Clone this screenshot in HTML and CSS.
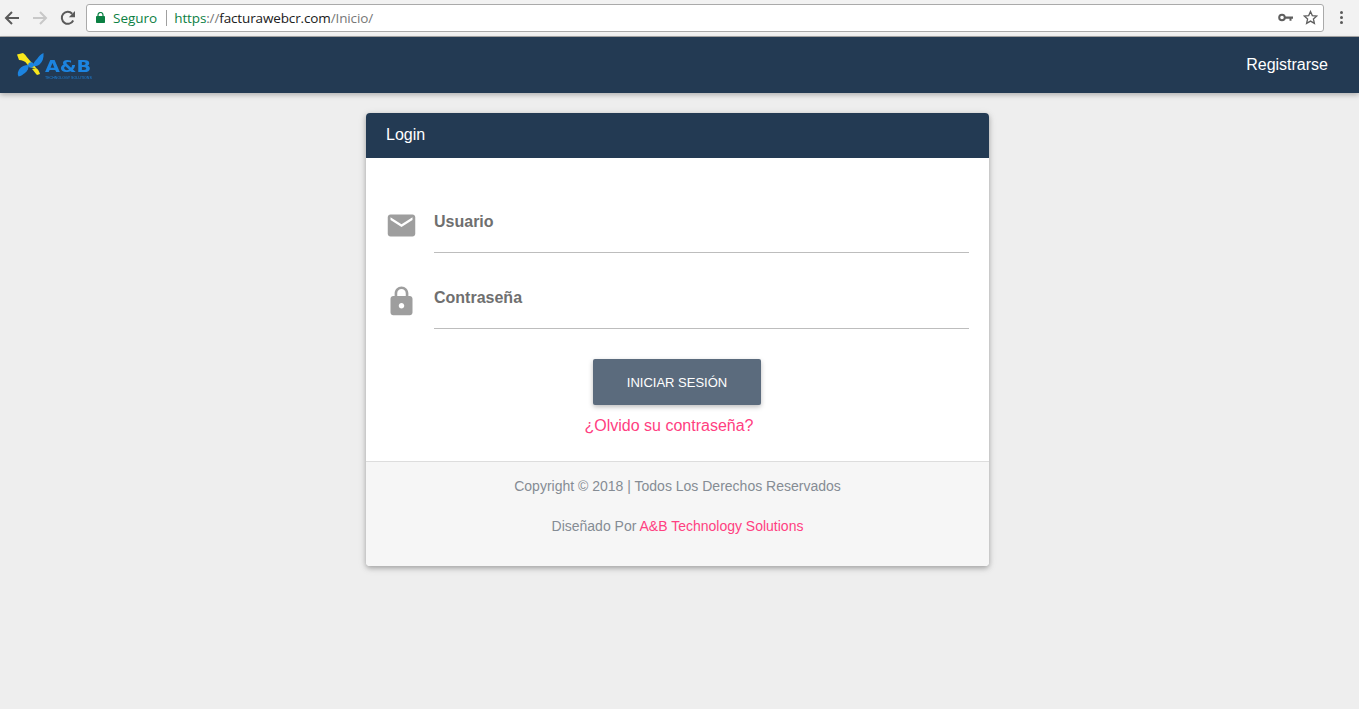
FILE: index.html
```html
<!DOCTYPE html>
<html lang="es">
<head>
<meta charset="utf-8">
<title>Login</title>
<link rel="stylesheet" href="styles.css">
</head>
<body>
<div class="browser">
  <svg class="tool first" width="16" height="16" viewBox="0 0 16 16"><path d="M15 8H2.500M8 2 2 8l6 6" fill="none" stroke="#5a5a5a" stroke-width="2"/></svg>
  <svg class="tool" width="16" height="16" viewBox="0 0 16 16"><path d="M1 8h12.500M8 2l6 6-6 6" fill="none" stroke="#c8c8c8" stroke-width="2"/></svg>
  <svg class="tool" width="16" height="16" viewBox="0 0 16 16"><path d="M13.200 10.500A6 6 0 1 1 12.200 3.700" fill="none" stroke="#5a5a5a" stroke-width="2"/><path d="M15 1v6.200H8.800z" fill="#5a5a5a"/></svg>
  <div class="omnibox">
    <svg class="lock-mini" width="9" height="11" viewBox="0 0 9 11"><path d="M2 4.500V3a2.500 2.500 0 0 1 5 0v1.500" fill="none" stroke="#0b8043" stroke-width="1.200"/><rect y="4" width="9" height="7" rx=".8" fill="#0b8043"/></svg>
    <span class="secure">Seguro</span>
    <span class="sep"></span>
    <span class="url"><span class="https">https</span><span class="dim">://</span>facturawebcr.com<span class="dim">/Inicio/</span></span>
    <svg class="key" width="15" height="9" viewBox="0 0 15 9"><circle cx="4" cy="4.500" r="2.800" fill="none" stroke="#5f5f5f" stroke-width="2"/><path d="M7 3.500h8v2.200h-1.500v2h-2v-2H7z" fill="#5f5f5f"/></svg>
    <svg class="star" width="15" height="15" viewBox="0 0 15 15"><path d="m7.500 1.500 1.800 4.100 4.500.4-3.400 3 1 4.400-3.900-2.300-3.900 2.300 1-4.400-3.400-3 4.500-.4z" fill="none" stroke="#5f5f5f" stroke-width="1.300"/></svg>
  </div>
  <span class="menu-dots"><i></i><i></i><i></i></span>
</div>
<nav class="topbar">
  <a class="brand" href="#">
    <svg class="brand-mark" width="27" height="24" viewBox="0 0 27 24">
      <path d="M0 1.500 6 0c3 2 5 6 8 9 2 2 4 4 5 6-4 .5-7-1-9-4C8 8 5 7 2 7z" fill="#f8e71c"/>
      <path d="M19 15c2 1 3 3 4 6l-3 1c-2-2-3-4-5-6z" fill="#f8e71c"/>
      <path d="M26.500 0c.5 5-1 9-4 11.500-2 1.500-4 2-6.500 1.500 0-3 2-5 4-7 2-3 4-5 6.500-6z" fill="#1c84e0"/>
      <path d="M11.500 12c.5 3-1 6-3.500 8-2 1.500-4 3-6.500 3.500C0 21 1 18 2.500 16c2-2.500 5-4 9-4z" fill="#1c84e0"/>
      <circle cx="14" cy="12" r="2.800" fill="#1c84e0"/>
    </svg>
    <span class="brand-text"><b>A&amp;B</b><small>TECHNOLOGY SOLUTIONS</small></span>
  </a>
  <a class="register" href="#">Registrarse</a>
</nav>
<main class="page">
  <section class="card">
    <header class="card-head">Login</header>
    <form class="card-body">
      <div class="field">
        <svg class="field-icon" viewBox="0 0 24 24"><path d="M20 4H4c-1.100 0-2 .9-2 2v12c0 1.100.9 2 2 2h16c1.100 0 2-.9 2-2V6c0-1.100-.9-2-2-2zm0 4-8 5-8-5V6l8 5 8-5v2z" fill="#9e9e9e"/></svg>
        <label class="field-input">Usuario</label>
      </div>
      <div class="field">
        <svg class="field-icon" viewBox="0 0 24 24"><path d="M18 8h-1V6c0-2.760-2.240-5-5-5S7 3.240 7 6v2H6c-1.100 0-2 .9-2 2v10c0 1.100.9 2 2 2h12c1.100 0 2-.9 2-2V10c0-1.100-.9-2-2-2zm-6 9c-1.100 0-2-.9-2-2s.9-2 2-2 2 .9 2 2-.9 2-2 2zm3.100-9H8.900V6c0-1.710 1.390-3.100 3.100-3.100s3.100 1.390 3.100 3.100v2z" fill="#9e9e9e"/></svg>
        <label class="field-input">Contraseña</label>
      </div>
      <button class="submit" type="button">INICIAR SESIÓN</button>
      <a class="forgot" href="#">¿Olvido su contraseña?</a>
    </form>
    <footer class="card-foot">
      <p>Copyright © 2018 | Todos Los Derechos Reservados</p>
      <p>Diseñado Por <a href="#">A&amp;B Technology Solutions</a></p>
    </footer>
  </section>
</main>
</body>
</html>
```
FILE: styles.css
```css
* { box-sizing: border-box; }
html, body { height: 100%; }
body {
  margin: 0;
  background: #eeeeee;
  font-family: "Liberation Sans", Arial, sans-serif;
  overflow: hidden;
}
a { text-decoration: none; }

.browser {
  height: 37px;
  background: #f2f2f2;
  border-bottom: 1px solid #a8a8a8;
  display: flex;
  align-items: center;
  padding: 0 0 1px 4px;
}
.tool { margin-right: 12px; flex: none; }
.tool:nth-of-type(3) { margin-right: 10px; }
.omnibox {
  flex: 1;
  height: 28px;
  background: #fff;
  border: 1px solid #aaaaaa;
  border-radius: 3px;
  display: flex;
  align-items: center;
  padding: 0 5px 0 9px;
  font-family: "Open Sans", sans-serif;
  font-size: 13.500px;
  color: #202020;
}
.lock-mini { flex: none; margin-top: -1px; }
.secure { color: #0b8043; margin-left: 8px; }
.sep { width: 1px; height: 16px; background: #a0a0a0; margin: 0 7px 0 9px; }
.url { flex: 1; letter-spacing: -.13px; }
.https { color: #0b8043; }
.dim { color: #777; }
.key { margin-right: 10px; }
.menu-dots {
  width: 35px;
  display: flex;
  flex-direction: column;
  align-items: center;
  gap: 2px;
}
.menu-dots i { width: 3px; height: 3px; border-radius: 50%; background: #5a5a5a; }

.topbar {
  height: 56px;
  background: #233a53;
  box-shadow: 0 2px 5px rgba(0,0,0,.26);
  display: flex;
  align-items: center;
  justify-content: space-between;
  padding: 0 31px 0 17px;
  position: relative;
}
.brand { display: flex; align-items: center; filter: blur(.35px); }
.brand-mark { flex: none; margin-top: -1px; }
.brand-text {
  display: flex;
  flex-direction: column;
  margin: 6px 0 0 1px;
  color: #1c84e0;
}
.brand-text b {
  font-family: "DejaVu Sans", sans-serif;
  font-size: 16px;
  line-height: 19px;
  transform: scaleX(1.2);
  transform-origin: left center;
}
.brand-text small {
  font-size: 3.600px;
  line-height: 4px;
  white-space: nowrap;
}
.register { color: #fff; font-size: 16px; }

.page {
  display: flex;
  justify-content: center;
  padding: 20px 4px 0 0;
}
.card {
  width: 623px;
  height: 453px;
  background: #fff;
  border-radius: 4px;
  box-shadow: 0 2px 5px rgba(0,0,0,.26), 0 2px 10px rgba(0,0,0,.1);
  overflow: hidden;
  display: flex;
  flex-direction: column;
}
.card-head {
  height: 45px;
  background: #233a53;
  color: #fff;
  font-size: 16px;
  line-height: 43px;
  padding-left: 20px;
}
.card-body {
  height: 303px;
  display: flex;
  flex-direction: column;
  align-items: center;
  padding: 19px 20px 0;
}
.field {
  width: 100%;
  height: 76px;
  display: flex;
  align-items: flex-start;
}
.field-icon {
  flex: none;
  width: 33px;
  height: 33px;
  margin: 31.500px 16px 0 -1px;
}
.field-input {
  flex: 1;
  height: 76px;
  border-bottom: 1px solid #bdbdbd;
  color: #6f6f6f;
  font-size: 16px;
  font-weight: bold;
  padding-top: 36px;
  line-height: 18px;
}
.submit {
  width: 168px;
  height: 46px;
  margin: 30px 1px 0 0;
  border: 0;
  border-radius: 2px;
  background: #5b6b7d;
  color: #fff;
  font-family: inherit;
  font-size: 13px;
  box-shadow: 0 2px 5px rgba(0,0,0,.26);
  padding: 0;
}
.forgot {
  color: #ff4081;
  font-size: 16px;
  line-height: 18px;
  margin: 12px 17px 0 0;
}

.card-foot {
  flex: 1;
  background: #f6f6f6;
  border-top: 1px solid #dddddd;
  text-align: center;
  color: #858c94;
  font-size: 14px;
  line-height: 16px;
  padding-top: 16px;
}
.card-foot p { margin: 0 0 24px; }
.card-foot a { color: #ff4081; }
```
